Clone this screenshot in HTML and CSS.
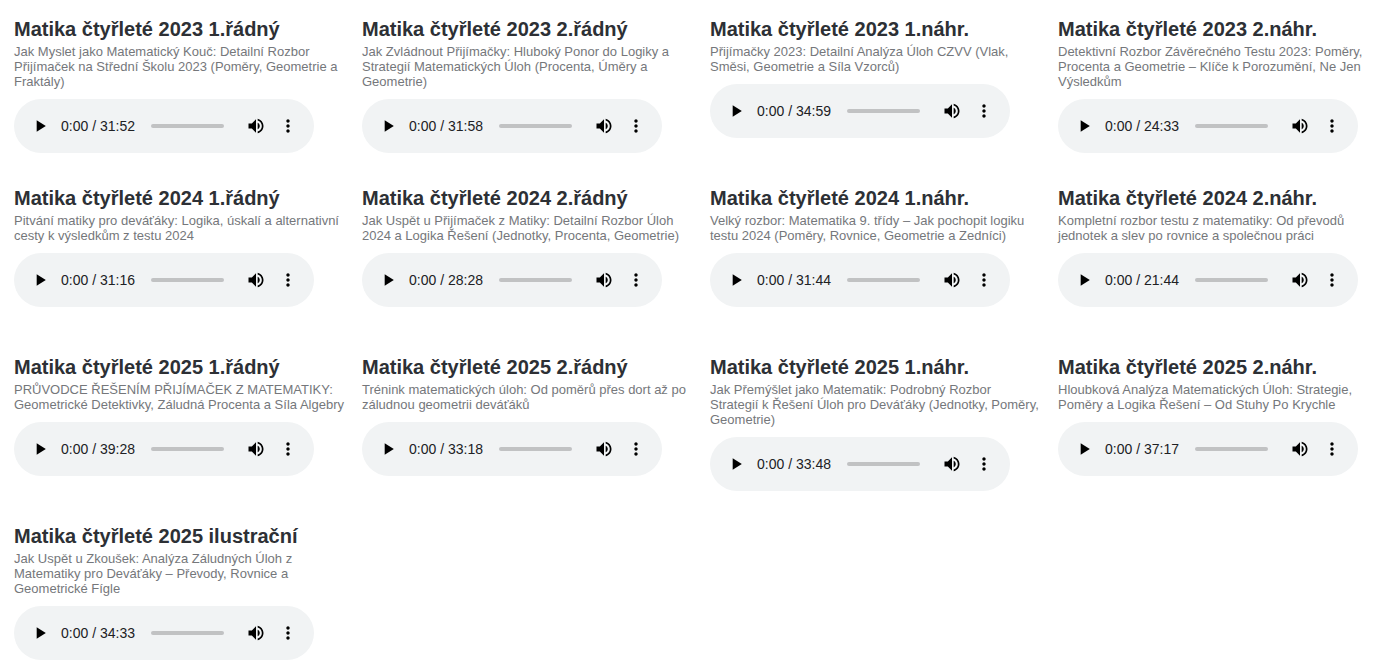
FILE: index.html
```html
<!DOCTYPE html>
<html lang="cs">
<head>
<meta charset="utf-8">
<title>Matika čtyřleté</title>
<link rel="stylesheet" href="styles.css">
</head>
<body>
<main class="episodes" id="episodes"></main>
<template id="episode">
  <article class="episode">
    <h2 class="title"></h2>
    <p class="summary"></p>
    <div class="player">
      <button class="control" type="button" aria-label="Přehrát"><svg viewBox="0 0 24 24"><path d="M8 5v14l11-7z"/></svg></button>
      <span class="time"></span>
      <input class="track" type="range" min="0" max="100" value="0" aria-label="Pozice">
      <button class="control" type="button" aria-label="Hlasitost"><svg viewBox="0 0 24 24"><path d="M3 9v6h4l5 5V4L7 9H3zm13.5 3c0-1.77-1.02-3.29-2.5-4.03v8.05c1.48-.73 2.5-2.25 2.5-4.02zM14 3.23v2.06c2.89.86 5 3.54 5 6.71s-2.11 5.85-5 6.71v2.06c4.01-.91 7-4.49 7-8.77s-2.99-7.86-7-8.77z"/></svg></button>
      <button class="control" type="button" aria-label="Další možnosti"><svg viewBox="0 0 24 24"><path d="M12 8c1.1 0 2-.9 2-2s-.9-2-2-2-2 .9-2 2 .9 2 2 2zm0 2c-1.1 0-2 .9-2 2s.9 2 2 2 2-.9 2-2-.9-2-2-2zm0 6c-1.1 0-2 .9-2 2s.9 2 2 2 2-.9 2-2-.9-2-2-2z"/></svg></button>
    </div>
  </article>
</template>
<script src="episodes.js"></script>
</body>
</html>
```
FILE: episodes.js
```js
const episodes = [
  ["2023 1.řádný", "31:52", "Jak Myslet jako Matematický Kouč: Detailní Rozbor Přijímaček na Střední Školu 2023 (Poměry, Geometrie a Fraktály)"],
  ["2023 2.řádný", "31:58", "Jak Zvládnout Přijímačky: Hluboký Ponor do Logiky a Strategií Matematických Úloh (Procenta, Úměry a Geometrie)"],
  ["2023 1.náhr.", "34:59", "Přijímačky 2023: Detailní Analýza Úloh CZVV (Vlak, Směsi, Geometrie a Síla Vzorců)"],
  ["2023 2.náhr.", "24:33", "Detektivní Rozbor Závěrečného Testu 2023: Poměry, Procenta a Geometrie – Klíče k Porozumění, Ne Jen Výsledkům"],
  ["2024 1.řádný", "31:16", "Pitvání matiky pro deváťáky: Logika, úskalí a alternativní cesty k výsledkům z testu 2024"],
  ["2024 2.řádný", "28:28", "Jak Uspět u Přijímaček z Matiky: Detailní Rozbor Úloh 2024 a Logika Řešení (Jednotky, Procenta, Geometrie)"],
  ["2024 1.náhr.", "31:44", "Velký rozbor: Matematika 9. třídy – Jak pochopit logiku testu 2024 (Poměry, Rovnice, Geometrie a Zedníci)"],
  ["2024 2.náhr.", "21:44", "Kompletní rozbor testu z matematiky: Od převodů jednotek a slev po rovnice a společnou práci"],
  ["2025 1.řádný", "39:28", "PRŮVODCE ŘEŠENÍM PŘIJÍMAČEK Z MATEMATIKY: Geometrické Detektivky, Záludná Procenta a Síla Algebry"],
  ["2025 2.řádný", "33:18", "Trénink matematických úloh: Od poměrů přes dort až po záludnou geometrii deváťáků"],
  ["2025 1.náhr.", "33:48", "Jak Přemýšlet jako Matematik: Podrobný Rozbor Strategií k Řešení Úloh pro Deváťáky (Jednotky, Poměry, Geometrie)"],
  ["2025 2.náhr.", "37:17", "Hloubková Analýza Matematických Úloh: Strategie, Poměry a Logika Řešení – Od Stuhy Po Krychle"],
  ["2025 ilustrační", "34:33", "Jak Uspět u Zkoušek: Analýza Záludných Úloh z Matematiky pro Deváťáky – Převody, Rovnice a Geometrické Fígle"]
];

const list = document.getElementById("episodes");
const template = document.getElementById("episode");
for (const [name, length, summary] of episodes) {
  const card = template.content.cloneNode(true);
  card.querySelector(".title").textContent = "Matika čtyřleté " + name;
  card.querySelector(".summary").textContent = summary;
  card.querySelector(".time").textContent = "0:00 / " + length;
  list.append(card);
}
```
FILE: styles.css
```css
* {
  box-sizing: border-box;
}

body {
  margin: 0;
  overflow-x: hidden;
  background: #fff;
  color: #2d3035;
  font-family: "Liberation Sans", Arial, sans-serif;
}

.episodes {
  display: grid;
  grid-template-columns: repeat(4, 1fr);
  grid-auto-rows: 1fr;
  gap: 33px 16px;
  margin: 17px -10px 0 14px;
}

.title {
  margin: 0 0 3px;
  font-size: 20px;
  line-height: 24px;
}

.summary {
  margin: 0 0 10px;
  color: #75777b;
  font-size: 13px;
  line-height: 15px;
}

.player {
  display: flex;
  align-items: center;
  width: 300px;
  max-width: 100%;
  height: 54px;
  padding: 0 10px;
  border-radius: 27px;
  background: #f1f3f4;
}

.control {
  display: flex;
  flex: none;
  align-items: center;
  justify-content: center;
  width: 32px;
  height: 32px;
  padding: 0;
  border: 0;
  background: none;
}

.control svg {
  width: 20px;
  height: 20px;
}

.time {
  padding-left: 5px;
  color: #202124;
  font-size: 14px;
  white-space: nowrap;
}

.track {
  flex: 1;
  min-width: 0;
  height: 4px;
  margin: 0 16px;
  border-radius: 2px;
  background: #c1c2c3;
  appearance: none;
}

.track::-webkit-slider-thumb {
  width: 0;
  height: 0;
  appearance: none;
}
```
